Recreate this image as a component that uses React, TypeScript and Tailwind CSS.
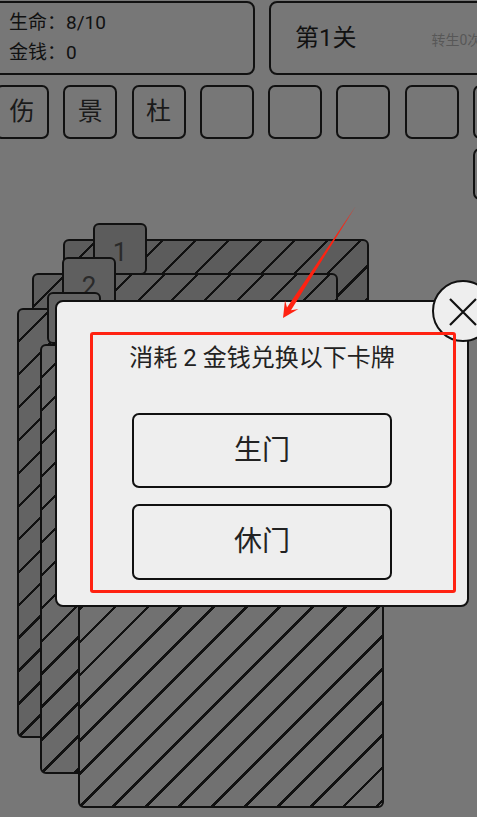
import React from "react";

// 卡牌堆（从后往前）
const cards = [
  { left: "left-[63px]", top: "top-[223px]", bg: "bg-[#5c5c5c]", label: "1" },
  { left: "left-[32px]", top: "top-[257px]", bg: "bg-[#5f5f5f]", label: "2" },
  { left: "left-[17px]", top: "top-[292px]", bg: "bg-[#636363]", label: "3" },
  { left: "left-[40px]", top: "top-[328px]", bg: "bg-[#6a6a6a]", label: "4" },
  { left: "left-[78px]", top: "top-[362px]", bg: "bg-[#717171]", label: "5" },
];

const slots = ["伤", "景", "杜", "", "", "", "", ""];

function Card({ left, top, bg, label }: { left: string; top: string; bg: string; label: string }) {
  return (
    <div className={`absolute ${left} ${top} w-[306px] h-[446px]`}>
      <div
        className={`absolute left-0 top-[16px] w-[306px] h-[430px] rounded-[6px] border-2 border-[#111] ${bg} bg-[repeating-linear-gradient(135deg,transparent_0_20.8px,#111_20.8px_23.3px)]`}
      />
      <div
        className={`absolute left-[30px] top-0 w-[54px] h-[52px] rounded-[6px] border-2 border-[#111] ${bg} flex justify-center pt-[12px] text-[26px] leading-[30px] text-[#2a2a2a]`}
      >
        {label}
      </div>
    </div>
  );
}

export default function App() {
  return (
    <div
      className="relative w-[477px] h-[817px] overflow-hidden bg-[#777777] text-[#111]"
      style={{ fontFamily: 'Roboto, "Noto Sans CJK SC", sans-serif' }}
    >
      {/* 顶部信息栏 */}
      <div className="flex gap-[14px] mt-[1px] -ml-[10px]">
        <div className="w-[265px] h-[74px] shrink-0 rounded-[8px] border-2 border-[#111] pl-[17px] pt-[7px] flex flex-col gap-[4px] text-[19px] leading-[26px]">
          <span>生命：8/10</span>
          <span>金钱：0</span>
        </div>
        <div className="w-[240px] h-[74px] shrink-0 rounded-[8px] border-2 border-[#111] pl-[24px] flex items-center">
          <span className="text-[24px] leading-[30px]">第1关</span>
          <span className="ml-[75px] mt-[4px] text-[14px] text-[#575757] whitespace-nowrap">转生0次</span>
        </div>
      </div>

      {/* 卡槽 */}
      <div className="flex gap-[14.3px] mt-[10px] -ml-[5px]">
        {slots.map((s, i) => (
          <div
            key={i}
            className="w-[54px] h-[54px] shrink-0 rounded-[7px] border-2 border-[#111] flex items-center justify-center text-[25px] text-[#1a1a1a]"
          >
            {s}
          </div>
        ))}
      </div>
      <div className="flex mt-[9px] ml-[473px]">
        <div className="w-[54px] h-[52px] shrink-0 rounded-[7px] border-2 border-[#111]" />
      </div>

      {/* 卡牌堆 */}
      {cards.map((c) => (
        <Card key={c.label} {...c} />
      ))}

      {/* 兑换弹窗 */}
      <div className="absolute left-[55px] top-[300px] w-[414px] h-[307px] rounded-[8px] border-2 border-[#111] bg-[#eeeeee] flex flex-col items-center pt-[40px]">
        <p className="text-[24px] leading-[32px] text-[#222]">消耗 2 金钱兑换以下卡牌</p>
        <div className="mt-[39px] flex flex-col gap-[16px]">
          <button className="w-[260px] h-[75px] rounded-[7px] border-2 border-[#111] bg-[#eeeeee] text-[28px] text-[#222]">
            生门
          </button>
          <button className="w-[260px] h-[76px] rounded-[7px] border-2 border-[#111] bg-[#eeeeee] text-[28px] text-[#222]">
            休门
          </button>
        </div>
      </div>

      {/* 关闭按钮 */}
      <div className="absolute left-[432px] top-[280px] w-[62px] h-[62px] rounded-full border-2 border-[#111] bg-[#eeeeee]">
        <svg className="absolute left-[14px] top-[15px]" width="30" height="30" viewBox="0 0 30 30">
          <path d="M2 2 L28 28 M28 2 L2 28" stroke="#111" strokeWidth="2.2" fill="none" />
        </svg>
      </div>

      {/* 标注 */}
      <div className="absolute left-[90px] top-[332px] w-[366px] h-[261px] rounded-[3px] border-[3px] border-[#ff2211]" />
      <svg className="absolute inset-0 pointer-events-none" width="477" height="817" viewBox="0 0 477 817">
        <polygon
          points="355.5,206.5 291,310.2 298.4,308.9 283,318 285,300.2 287,307.4"
          fill="#ff2211"
        />
      </svg>
    </div>
  );
}
